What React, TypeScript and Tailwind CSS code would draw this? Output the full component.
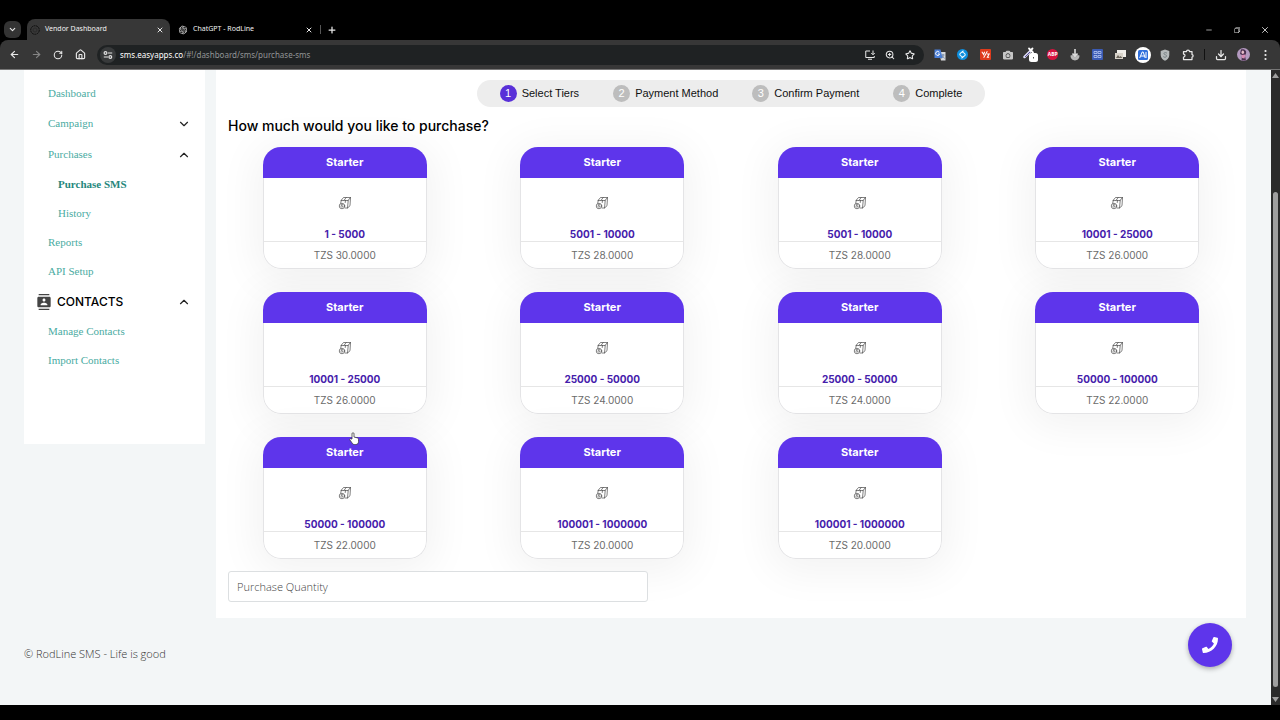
import type { ReactNode } from "react";
import {
  ArrowLeft,
  ArrowRight,
  ChevronDown,
  ChevronUp,
  Download,
  House,
  Minus,
  Plus,
  Puzzle,
  RotateCw,
  Star,
  X,
  ZoomIn,
} from "lucide-react";
import { FaPhone, FaCamera } from "react-icons/fa";
import { MdContacts } from "react-icons/md";
import { RiOpenaiFill } from "react-icons/ri";
import { VscChromeRestore } from "react-icons/vsc";

const tiers = [
  ["1 - 5000", "30.0000"],
  ["5001 - 10000", "28.0000"],
  ["5001 - 10000", "28.0000"],
  ["10001 - 25000", "26.0000"],
  ["10001 - 25000", "26.0000"],
  ["25000 - 50000", "24.0000"],
  ["25000 - 50000", "24.0000"],
  ["50000 - 100000", "22.0000"],
  ["50000 - 100000", "22.0000"],
  ["100001 - 1000000", "20.0000"],
  ["100001 - 1000000", "20.0000"],
];

const steps = ["Select Tiers", "Payment Method", "Confirm Payment", "Complete"];

function IconButton({ label, children }: { label: string; children: ReactNode }) {
  return (
    <button type="button" aria-label={label} className="flex size-5 shrink-0 items-center justify-center">
      {children}
    </button>
  );
}

function Tab({ title, icon, active }: { title: string; icon: ReactNode; active?: boolean }) {
  return (
    <div
      className={
        active
          ? "flex h-[21px] w-[143px] items-center rounded-t-lg bg-[#373737] pr-1 pl-[3px]"
          : "flex h-[21px] w-[149px] items-center pr-1 pl-2"
      }
    >
      {icon}
      <a href="#tab" className="ml-[5px] flex-1 text-[7px] whitespace-nowrap text-[#f2f2f2]">
        {title}
      </a>
      <button type="button" aria-label={`Close ${title}`} className="flex size-3 items-center justify-center">
        <X size={8} strokeWidth={3} />
      </button>
    </div>
  );
}

function SiteSettingsIcon() {
  return (
    <svg width="10" height="10" viewBox="0 0 10 10" fill="none" stroke="#e3e3e3" strokeWidth="1.2">
      <circle cx="2.5" cy="3" r="1.4" />
      <path d="M5 3h4.2M0.8 7H5" />
      <circle cx="7.3" cy="7" r="1.4" />
    </svg>
  );
}

function InstallIcon() {
  return (
    <svg width="12" height="12" viewBox="0 0 24 24" fill="none" stroke="currentColor" strokeWidth="2">
      <path d="M12 4H3.500v13h17v-3M8 20.500h8M18 3v8M14.500 8l3.500 3.500L21.500 8" />
    </svg>
  );
}

function Extensions() {
  return (
    <div className="flex w-[268px] shrink-0 items-center justify-between">
      <IconButton label="Translate">
        <svg width="12" height="12" viewBox="0 0 12 12">
          <path d="M5 3h6.5v8.5H7z" fill="#d5d8dc" />
          <path d="M.5.5h6l2 8.500h-8z" fill="#4a7fd8" />
          <path d="M5.300 3.300A2 2 0 1 0 5.600 5H4" fill="none" stroke="#fff" />
          <path d="M7.500 6h3M9 5v1c0 2-1 3-1.500 3.500M8.500 7l2 2.500" stroke="#57729a" strokeWidth=".7" fill="none" />
        </svg>
      </IconButton>
      <IconButton label="Music finder">
        <svg width="11" height="11" viewBox="0 0 12 12">
          <circle cx="6" cy="6" r="6" fill="#0d8ede" />
          <path
            d="M6.800 2.200 3.600 4.700a1.700 1.700 0 0 0 .2 2.600L5.500 8.300M5.200 9.800 8.400 7.300a1.700 1.700 0 0 0-.2-2.600L6.500 3.700"
            fill="none"
            stroke="#fff"
            strokeWidth="1.100"
            strokeLinecap="round"
          />
        </svg>
      </IconButton>
      <IconButton label="Markup tools">
        <svg width="11" height="11" viewBox="0 0 12 12">
          <rect width="12" height="12" rx="1" fill="#df3b1c" />
          <path d="m2 3 2 3 1-3M4 9.500 8 2.500M7.500 5.500H10L8 9h2" fill="none" stroke="#fff" strokeWidth="1.100" />
        </svg>
      </IconButton>
      <IconButton label="Capture">
        <FaCamera size={10} color="#c6c6c6" />
      </IconButton>
      <IconButton label="Colour picker">
        <svg width="15" height="15" viewBox="0 0 15 15">
          <path d="M1.500 10 8 3.500" stroke="#dcdcf2" strokeWidth="2.500" strokeLinecap="round" />
          <path d="m2 10 5-5" stroke="#5a4e9e" strokeWidth="1" />
          <path d="m6 1.500 4 4M7.500 3.500l2-2" stroke="#fff" strokeWidth="1.800" strokeLinecap="round" />
          <rect x="6" y="6" width="9" height="9" rx="2.500" fill="#fff" />
          <path d="M10.500 10v1.500" stroke="#555" strokeWidth="1" />
        </svg>
      </IconButton>
      <IconButton label="Ad blocker">
        <span className="flex size-[11px] items-center justify-center rounded-full bg-[#d8133f] font-sans text-[5px] leading-none font-bold text-white">
          ABP
        </span>
      </IconButton>
      <IconButton label="Downloader">
        <svg width="10" height="12" viewBox="0 0 10 12">
          <path d="M.5 6.500c0 6.500 9 6.500 9 0L7.500 6 5 8.500 2.500 6z" fill="#b9b9b9" />
          <path d="M5 0v6M2.500 4.500 5 7.500l2.500-3" fill="none" stroke="#ddd" strokeWidth="1.600" />
        </svg>
      </IconButton>
      <IconButton label="Code grabber">
        <svg width="11" height="11" viewBox="0 0 11 11">
          <rect width="11" height="11" rx="1" fill="#3b5bb5" />
          <path d="M2 2.500h3v2H2zM6 2.500h3v2H6zM2 6.500h3v2H2zM6 6.500h3v2H6z" fill="none" stroke="#b8c8f2" strokeWidth=".8" />
        </svg>
      </IconButton>
      <IconButton label="Images">
        <svg width="11" height="11" viewBox="0 0 11 11">
          <rect x="2" y="1" width="9" height="7" fill="#f0eeea" />
          <rect x="0" y="4" width="8" height="6" fill="#d8d3ca" />
          <path d="M1 9l2-3 1.500 2 1-1L7.500 9z" fill="#6c665d" />
        </svg>
      </IconButton>
      <IconButton label="Assistant">
        <svg width="16" height="16" viewBox="0 0 16 16">
          <circle cx="8" cy="8" r="8" fill="#fff" />
          <rect x="3" y="3" width="10" height="10" rx="1.500" fill="#2f6fdc" />
          <path d="m4.700 11 2.500-6h1l2 6M6 9h3.500M11 5v6" fill="none" stroke="#fff" strokeWidth="1" />
        </svg>
      </IconButton>
      <IconButton label="Privacy shield">
        <svg width="10" height="12" viewBox="0 0 10 12">
          <path d="M5 .5 9.300 2v4C9.300 9 7 11 5 11.700 3 11 .7 9 .7 6V2z" fill="#b4b9ba" />
          <path d="M7 4.200C5 2.800 3.500 4 4 5s3 .7 2.600 2.200S4 8.500 3.200 7.500" fill="none" stroke="#7b8588" />
        </svg>
      </IconButton>
      <IconButton label="Extensions">
        <svg width="12" height="12" viewBox="0 0 24 24" fill="none" stroke="currentColor" strokeWidth="2.500" strokeLinejoin="round">
          <path d="M3 5h6c0-4 6-4 6 0h5v6c3 0 3 5 0 5v5H3v-5c4 0 4-6 0-6z" />
        </svg>
      </IconButton>
    </div>
  );
}

function BrowserChrome() {
  return (
    <header className="bg-black pt-[19px] font-['Noto_Sans','Open_Sans',sans-serif] text-[#e8e8e8]">
      <div className="flex items-center">
        <button type="button" aria-label="Search tabs" className="mr-[6px] ml-1 flex size-[17px] items-center justify-center rounded-md bg-[#333]">
          <ChevronDown size={9} strokeWidth={3} />
        </button>
        <Tab
          active
          title="Vendor Dashboard"
          icon={
            <svg width="10" height="10" viewBox="0 0 10 10" fill="none" stroke="#111">
              <circle cx="5" cy="5" r="4.300" strokeDasharray="2 .6" />
              <circle cx="5" cy="5" r="2" stroke="#2a2a2a" />
            </svg>
          }
        />
        <Tab title="ChatGPT - RodLine" icon={<RiOpenaiFill size={10} />} />
        <span className="ml-px h-[9px] w-px bg-[#555]" />
        <button type="button" aria-label="New tab" className="ml-[5px] flex size-3 items-center justify-center">
          <Plus size={10} strokeWidth={3} />
        </button>
        <div className="mr-[5px] ml-auto flex items-center gap-2">
          <IconButton label="Minimize">
            <Minus size={8} strokeWidth={2} />
          </IconButton>
          <IconButton label="Restore">
            <VscChromeRestore size={8} />
          </IconButton>
          <IconButton label="Close window">
            <X size={10} strokeWidth={2} />
          </IconButton>
        </div>
      </div>
      <div className="flex h-[30px] items-center rounded-t-lg border-b border-[#777] bg-[#373737] pl-1">
        <nav aria-label="Browser" className="flex gap-[2px]">
          <IconButton label="Back">
            <ArrowLeft size={11} strokeWidth={2.5} />
          </IconButton>
          <IconButton label="Forward">
            <ArrowRight size={11} strokeWidth={2.5} color="#858585" />
          </IconButton>
          <IconButton label="Reload">
            <RotateCw size={10} strokeWidth={2.5} />
          </IconButton>
          <IconButton label="Home">
            <House size={11} strokeWidth={2.5} />
          </IconButton>
        </nav>
        <div className="mr-[6px] ml-[7px] flex h-5 flex-1 items-center rounded-full bg-[#1f2223] pr-1 pl-[3px]">
          <button type="button" aria-label="Site information" className="flex size-4 items-center justify-center rounded-full bg-[#383a3b]">
            <SiteSettingsIcon />
          </button>
          <a href="#address" className="ml-1 flex-1 text-[8px] text-[#929596]">
            <span className="text-white">sms.easyapps.co</span>/#!/dashboard/sms/purchase-sms
          </a>
          <IconButton label="Install app">
            <InstallIcon />
          </IconButton>
          <IconButton label="Zoom">
            <ZoomIn size={10} strokeWidth={2.5} />
          </IconButton>
          <IconButton label="Bookmark">
            <Star size={10} strokeWidth={2.5} />
          </IconButton>
        </div>
        <Extensions />
        <span className="mx-[6px] h-[11px] w-px bg-[#111]" />
        <div className="flex shrink-0 items-center gap-[2px] pr-[5px]">
          <IconButton label="Downloads">
            <Download size={12} strokeWidth={2.5} />
          </IconButton>
          <IconButton label="Profile">
            <svg width="13" height="13" viewBox="0 0 13 13">
              <circle cx="6.500" cy="6.500" r="6.500" fill="#b49ac0" />
              <path d="M4 1.500c3-1 6 1 5 4L8 8l1 4.500H4.500L5 7 3 6z" fill="#4d3150" />
              <ellipse cx="5.800" cy="4.200" rx="1.300" ry="1.800" fill="#e8bccb" />
              <path d="m4.500 7 4-.5-1 4-2.500-.5z" fill="#d98bb4" />
            </svg>
          </IconButton>
          <IconButton label="Menu">
            <svg width="3" height="12" viewBox="0 0 3 12" fill="#eee">
              <circle cx="1.500" cy="2" r="1.100" />
              <circle cx="1.500" cy="6" r="1.100" />
              <circle cx="1.500" cy="10" r="1.100" />
            </svg>
          </IconButton>
        </div>
      </div>
    </header>
  );
}

function NavLink({ label, nested, current }: { label: string; nested?: boolean; current?: boolean }) {
  return (
    <li className={nested ? "flex h-[29px] items-center pl-[34px]" : "flex h-[29px] items-center pl-6"}>
      <a
        href="#nav"
        aria-current={current ? "page" : undefined}
        className={current ? "font-bold text-[#26877c]" : "text-[#4aaba2]"}
      >
        {label}
      </a>
    </li>
  );
}

function NavGroup({ label, open }: { label: string; open?: boolean }) {
  return (
    <li>
      <button type="button" aria-expanded={!!open} className="flex h-[31px] w-full items-center justify-between pr-[14px] pl-6 text-left text-[#4aaba2]">
        {label}
        {open ? <ChevronUp size={14} color="#222" /> : <ChevronDown size={14} color="#222" />}
      </button>
    </li>
  );
}

function Sidebar() {
  return (
    <nav aria-label="Main" className="min-h-[374px] w-[181px] shrink-0 bg-white pt-[9px] font-['Liberation_Serif',serif] text-[11px]">
      <ul>
        <NavLink label="Dashboard" />
        <NavGroup label="Campaign" />
        <NavGroup label="Purchases" open />
        <NavLink label="Purchase SMS" nested current />
        <NavLink label="History" nested />
        <NavLink label="Reports" />
        <NavLink label="API Setup" />
        <li>
          <button type="button" aria-expanded className="flex h-[31px] w-full items-center pr-[14px] pl-3 font-['Inter',sans-serif] text-[12px] font-medium text-black">
            <MdContacts size={16} color="#444" />
            <span className="ml-[5px] flex-1 text-left">CONTACTS</span>
            <ChevronUp size={14} color="#222" />
          </button>
        </li>
        <NavLink label="Manage Contacts" />
        <NavLink label="Import Contacts" />
      </ul>
    </nav>
  );
}

function MoneyBoxIcon() {
  return (
    <svg width="14" height="14" viewBox="0 0 28 28" fill="none" stroke="#4a4a4a" strokeWidth="1.400" strokeLinejoin="round" strokeLinecap="round">
      <path d="M6.500 8.500 11 3h14l-4.500 5.500zM20.500 8.500 19 24l5-4.500L25 3M6.500 8.500 5.500 14M19 24h-5M12 8.500 16.500 3" />
      <path d="M15 8.500 14.500 13" />
      <circle cx="8" cy="20" r="5.500" />
      <path d="M10 17.500c-2-1.200-4-.6-4 .7s4 1 4 2.500-2.500 2-4.200.8" />
    </svg>
  );
}

function TierCard({ range, price }: { range: string; price: string }) {
  return (
    <button
      type="button"
      className="flex h-[122px] w-[164px] flex-col overflow-hidden rounded-[18px] bg-white text-center text-[10px] shadow-[0_6px_40px_8px_rgba(0,0,0,0.05)]"
    >
      <span className="flex h-[31px] w-full shrink-0 items-center justify-center bg-[#5e35eb] pb-px text-[11px] font-bold text-white">Starter</span>
      <span className="flex w-full flex-1 flex-col rounded-b-[18px] border border-t-0 border-[#e4e4e6]">
        <span className="flex w-full flex-1 items-center justify-center">
          <MoneyBoxIcon />
        </span>
        <span className="w-full border-b border-[#e6e6e6] leading-[14px] font-bold text-[#4520ab]">{range}</span>
        <span className="flex h-[26px] w-full items-center justify-center text-[#6b6b6b]">TZS {price}</span>
      </span>
    </button>
  );
}

function Stepper() {
  return (
    <ol className="mx-auto flex h-[27px] w-fit items-center gap-[34px] rounded-full bg-[#ededed] px-[23px] font-['Liberation_Sans',sans-serif] text-[11px] text-[#111]">
      {steps.map((step, i) => (
        <li key={step} className="flex items-center gap-[5px]">
          <span
            className={
              i === 0
                ? "flex size-[17px] items-center justify-center rounded-full bg-[#5930d8] text-white"
                : "flex size-[17px] items-center justify-center rounded-full bg-[#bdbdbd] text-white"
            }
          >
            {i + 1}
          </span>
          {step}
        </li>
      ))}
    </ol>
  );
}

function Scrollbar() {
  return (
    <div aria-hidden="true" className="flex w-[9px] shrink-0 flex-col items-center bg-[#2b2b2b] py-[3px]">
      <svg width="7" height="5" viewBox="0 0 7 5" fill="#9f9f9f">
        <path d="M3.500 0 7 5H0z" />
      </svg>
      <div className="flex w-[5px] flex-1 flex-col pt-[114px] pb-[10px]">
        <div className="flex-1 rounded-full bg-[#9f9f9f]" />
      </div>
      <svg width="7" height="5" viewBox="0 0 7 5" fill="#9f9f9f">
        <path d="M0 0h7L3.500 5z" />
      </svg>
    </div>
  );
}

export default function App() {
  return (
    <div className="flex min-h-screen flex-col bg-black pb-[15px]">
      <BrowserChrome />
      <div className="flex flex-1">
        <div className="relative flex-1 bg-[#f3f6f7] pr-[25px] pl-6">
          <div className="flex items-start gap-[11px]">
            <Sidebar />
            <main className="flex-1 bg-white pt-[10px] pb-4 font-['Inter',sans-serif]">
              <Stepper />
              <h1 className="mt-[9px] px-3 text-[14px] leading-[20px] font-medium text-black">How much would you like to purchase?</h1>
              <div className="mt-[11px] grid grid-cols-4 justify-items-center gap-y-[23px]">
                {tiers.map(([range, price], i) => (
                  <TierCard key={i} range={range} price={price} />
                ))}
              </div>
              <div className="mt-3 px-3">
                <input
                  type="text"
                  aria-label="Purchase Quantity"
                  placeholder="Purchase Quantity"
                  className="relative block h-[31px] w-full max-w-[420px] rounded-[3px] border border-[#dcdfe1] bg-white px-2 font-['Open_Sans',sans-serif] text-[11px] font-light text-[#333] placeholder:text-[#444]"
                />
              </div>
            </main>
          </div>
          <footer className="pt-[27px] font-['Open_Sans',sans-serif] text-[11px] leading-[18px] font-light text-[#333]">
            © RodLine SMS - Life is good
          </footer>
          <button
            type="button"
            aria-label="Call support"
            className="absolute right-[39px] bottom-[38px] flex size-11 items-center justify-center rounded-full bg-[#5e35eb] text-white shadow-[0_2px_5px_rgba(0,0,0,0.3)]"
          >
            <FaPhone size={16} />
          </button>
          <svg className="pointer-events-none absolute top-[362px] left-[349px]" width="10" height="13" viewBox="0 0 20 26">
            <path
              d="M6 14V3.500a2 2 0 0 1 4 0V10l7 1.800c1.500.5 2 1.500 2 3V19c0 4-2 6-6 6h-2c-3 0-4-1.500-5.500-4L1.500 15.500c-.8-1.700 1.500-3 2.800-1.500z"
              fill="#fff"
              stroke="#333"
              strokeWidth="1.500"
            />
          </svg>
        </div>
        <Scrollbar />
      </div>
    </div>
  );
}
